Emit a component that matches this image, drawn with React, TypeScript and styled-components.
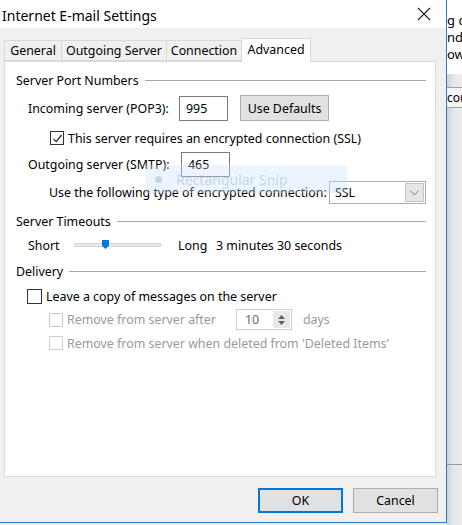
import React from "react";
import styled, { createGlobalStyle } from "styled-components";

const GlobalStyle = createGlobalStyle`
  html, body {
    margin: 0;
    padding: 0;
    background: #e9e9e9;
  }
  body {
    font-family: "Noto Sans", "Liberation Sans", sans-serif;
    font-size: 12.4px;
    color: #000;
  }
`;

const Desktop = styled.div`
  display: flex;
  width: 462px;
  height: 525px;
  overflow: hidden;
`;

const Window = styled.div`
  position: relative;
  display: flex;
  flex-direction: column;
  width: 446px;
  height: 522px;
  flex-shrink: 0;
  background: #f0f0f0;
  border-right: 1px solid #2a7bc5;
  border-bottom: 1px solid #2a7bc5;
`;

const TitleBar = styled.div`
  display: flex;
  align-items: center;
  height: 28px;
  padding: 0 0 0 2px;
  background: #fff;
`;

const Title = styled.div`
  flex: 1;
  font-size: 14px;
  margin-top: 2px;
`;

const CloseButton = styled.div`
  display: flex;
  align-items: center;
  justify-content: center;
  width: 40px;
  height: 28px;
  margin-right: 2px;
`;

const TabList = styled.div`
  display: flex;
  align-items: flex-end;
  height: 23px;
  margin: 10px 0 0 4px;
  position: relative;
  z-index: 1;
`;

const Tab = styled.div<{ active?: boolean; width: number }>`
  display: flex;
  align-items: center;
  justify-content: center;
  box-sizing: border-box;
  width: ${(p) => p.width}px;
  height: ${(p) => (p.active ? 24 : 21)}px;
  margin-bottom: ${(p) => (p.active ? -1 : 0)}px;
  padding-bottom: ${(p) => (p.active ? 3 : 0)}px;
  background: ${(p) => (p.active ? "#fff" : "#f0f0f0")};
  border: 1px solid #d9d9d9;
  border-bottom: ${(p) => (p.active ? "none" : "1px solid #d9d9d9")};
  margin-left: -1px;
  &:first-child {
    margin-left: 0;
  }
`;

const Panel = styled.div`
  display: flex;
  flex-direction: column;
  box-sizing: border-box;
  width: 432px;
  height: 416px;
  margin-left: 4px;
  padding: 10px 9px 0 11px;
  background: #fff;
  border: 1px solid #d9d9d9;
`;

const GroupHeader = styled.div<{ top: number }>`
  display: flex;
  align-items: center;
  gap: 6px;
  height: 16px;
  margin-top: ${(p) => p.top}px;
  &::after {
    content: "";
    flex: 1;
    height: 1px;
    background: #a8a8a8;
    margin-top: 1px;
  }
`;

const Row = styled.div<{ top: number; indent: number; h: number }>`
  display: flex;
  align-items: center;
  height: ${(p) => p.h}px;
  margin-top: ${(p) => p.top}px;
  padding-left: ${(p) => p.indent}px;
`;

const Label = styled.span<{ w?: number; disabled?: boolean }>`
  ${(p) => (p.w ? `width: ${p.w}px; flex-shrink: 0;` : "")}
  color: ${(p) => (p.disabled ? "#9a9a9a" : "#000")};
  white-space: nowrap;
`;

const TextBox = styled.div<{ w: number; h: number }>`
  display: flex;
  align-items: center;
  box-sizing: border-box;
  width: ${(p) => p.w}px;
  height: ${(p) => p.h}px;
  padding-left: 6px;
  border: 1px solid #7a7a7a;
  background: #fff;
`;

const Button = styled.div<{ w: number; h: number; primary?: boolean; gapLeft?: number }>`
  display: flex;
  align-items: center;
  justify-content: center;
  box-sizing: border-box;
  width: ${(p) => p.w}px;
  height: ${(p) => p.h}px;
  margin-left: ${(p) => p.gapLeft ?? 0}px;
  background: #e1e1e1;
  border: ${(p) => (p.primary ? "2px solid #0078d7" : "1px solid #adadad")};
`;

const CheckBox = styled.div<{ dark?: boolean; disabled?: boolean }>`
  display: flex;
  align-items: center;
  justify-content: center;
  box-sizing: border-box;
  width: ${(p) => (p.dark ? 15 : 14)}px;
  height: ${(p) => (p.dark ? 15 : 14)}px;
  margin-right: 4px;
  background: #fff;
  border: 1px solid ${(p) => (p.disabled ? "#cfcfcf" : "#333")};
`;

const Select = styled.div`
  display: flex;
  align-items: center;
  box-sizing: border-box;
  width: 97px;
  height: 23px;
  margin-left: auto;
  padding: 0 1px 0 5px;
  border: 1px solid #adadad;
  background: #fff;
`;

const SelectArrow = styled.div`
  display: flex;
  align-items: center;
  justify-content: center;
  margin-left: auto;
  width: 19px;
  height: 19px;
  box-sizing: border-box;
  background: #e5e5e5;
  border: 1px solid #c4c4c4;
`;

const SliderTrack = styled.div`
  position: relative;
  box-sizing: border-box;
  width: 87px;
  height: 4px;
  margin: 0 17px 0 0;
  background: #e7eaea;
  border: 1px solid #d6d6d6;
`;

const SliderThumb = styled.div`
  position: absolute;
  left: 27px;
  top: -4px;
  width: 7px;
  height: 9px;
  background: #0078d7;
  clip-path: polygon(0 0, 100% 0, 100% 65%, 50% 100%, 0 65%);
`;

const SpinBox = styled.div`
  display: flex;
  align-items: center;
  box-sizing: border-box;
  width: 56px;
  height: 21px;
  margin-left: 20px;
  margin-right: 11px;
  padding-left: 8px;
  border: 1px solid #cfcfcf;
  color: #6d6d6d;
`;

const SpinArrows = styled.div`
  display: flex;
  flex-direction: column;
  align-items: center;
  justify-content: center;
  margin-left: auto;
  width: 17px;
  height: 17px;
  margin-right: 1px;
  background: #e8e8e8;
  gap: 2px;
`;

const ButtonRow = styled.div`
  display: flex;
  justify-content: flex-end;
  gap: 10px;
  margin-top: 11px;
  padding-right: 8px;
`;

const SnipHint = styled.div`
  position: absolute;
  left: 145px;
  top: 165px;
  width: 202px;
  height: 28px;
  display: flex;
  align-items: center;
  gap: 14px;
  padding-left: 10px;
  box-sizing: border-box;
  background: rgba(200, 225, 248, 0.35);
  color: rgba(150, 175, 205, 0.45);
  font-size: 14px;
  pointer-events: none;
  &::before {
    content: "";
    width: 7px;
    height: 7px;
    border-radius: 50%;
    background: rgba(150, 175, 205, 0.45);
  }
`;

const Behind = styled.div`
  display: flex;
  flex-direction: column;
  width: 15px;
  overflow: hidden;
  background: linear-gradient(to right, #c9d3dc 0px, #e4e6e8 6px, #ececec 15px);
`;

const BehindTop = styled.div`
  height: 74px;
  padding-top: 12px;
  box-sizing: border-box;
  background: #fff;
  font-size: 13px;
  line-height: 17px;
  white-space: nowrap;
`;

const BehindRow = styled.div`
  height: 19px;
  margin-top: 13px;
  border-top: 1px solid #a0a0a0;
  border-bottom: 1px solid #a0a0a0;
  background: #f4f4f4;
  font-size: 12px;
  line-height: 19px;
  white-space: nowrap;
`;

const BehindLine = styled.div`
  height: 1px;
  margin-top: 356px;
  background: #9a9a9a;
`;

const CloseIcon = () => (
  <svg width="16" height="16" viewBox="0 0 16 16">
    <path d="M2 2 L14 14 M14 2 L2 14" stroke="#222" strokeWidth="1.1" fill="none" />
  </svg>
);

const CheckIcon = () => (
  <svg width="11" height="11" viewBox="0 0 11 11">
    <path d="M1.5 5.8 L4.2 8.6 L9.6 2" stroke="#222" strokeWidth="1.2" fill="none" />
  </svg>
);

const ChevronDown = () => (
  <svg width="9" height="6" viewBox="0 0 9 6">
    <path d="M0.5 0.8 L4.5 4.8 L8.5 0.8" stroke="#777" strokeWidth="1" fill="none" />
  </svg>
);

const SpinUp = () => (
  <svg width="7" height="4" viewBox="0 0 7 4">
    <path d="M0 4 L3.5 0 L7 4 Z" fill="#606060" />
  </svg>
);

const SpinDown = () => (
  <svg width="7" height="4" viewBox="0 0 7 4">
    <path d="M0 0 L3.5 4 L7 0 Z" fill="#606060" />
  </svg>
);

export default function App() {
  return (
    <>
      <GlobalStyle />
      <Desktop>
        <Window>
          <TitleBar>
            <Title>Internet E-mail Settings</Title>
            <CloseButton>
              <CloseIcon />
            </CloseButton>
          </TitleBar>

          <TabList>
            <Tab width={58}>General</Tab>
            <Tab width={106}>Outgoing Server</Tab>
            <Tab width={76}>Connection</Tab>
            <Tab width={70} active>
              Advanced
            </Tab>
          </TabList>

          <Panel>
            <GroupHeader top={0}>Server Port Numbers</GroupHeader>

            <Row top={7} indent={12} h={26}>
              <Label w={151}>Incoming server (POP3):</Label>
              <TextBox w={49} h={25}>995</TextBox>
              <Button w={89} h={26} gapLeft={12}>
                Use Defaults
              </Button>
            </Row>

            <Row top={10} indent={34} h={14}>
              <CheckBox>
                <CheckIcon />
              </CheckBox>
              <Label>This server requires an encrypted connection (SSL)</Label>
            </Row>

            <Row top={7} indent={12} h={25}>
              <Label w={153}>Outgoing server (SMTP):</Label>
              <TextBox w={49} h={25}>465</TextBox>
            </Row>

            <Row top={4} indent={33} h={23}>
              <Label>Use the following type of encrypted connection:</Label>
              <Select>
                SSL
                <SelectArrow>
                  <ChevronDown />
                </SelectArrow>
              </Select>
            </Row>

            <GroupHeader top={9}>Server Timeouts</GroupHeader>

            <Row top={8} indent={12} h={16}>
              <Label w={46}>Short</Label>
              <SliderTrack>
                <SliderThumb />
              </SliderTrack>
              <Label w={38}>Long</Label>
              <Label>3 minutes 30 seconds</Label>
            </Row>

            <GroupHeader top={10}>Delivery</GroupHeader>

            <Row top={9} indent={11} h={16}>
              <CheckBox dark />
              <Label>Leave a copy of messages on the server</Label>
            </Row>

            <Row top={5} indent={33} h={21}>
              <CheckBox disabled />
              <Label disabled>Remove from server after</Label>
              <SpinBox>
                10
                <SpinArrows>
                  <SpinUp />
                  <SpinDown />
                </SpinArrows>
              </SpinBox>
              <Label disabled>days</Label>
            </Row>

            <Row top={5} indent={33} h={16}>
              <CheckBox disabled />
              <Label disabled>Remove from server when deleted from 'Deleted Items'</Label>
            </Row>
          </Panel>

          <ButtonRow>
            <Button w={85} h={25} primary>
              OK
            </Button>
            <Button w={85} h={25}>
              Cancel
            </Button>
          </ButtonRow>

          <SnipHint>Rectangular Snip</SnipHint>
        </Window>

        <Behind>
          <BehindTop>
            <div>g c</div>
            <div>nd</div>
            <div>ow</div>
          </BehindTop>
          <BehindRow>cou</BehindRow>
          <BehindLine />
        </Behind>
      </Desktop>
    </>
  );
}
